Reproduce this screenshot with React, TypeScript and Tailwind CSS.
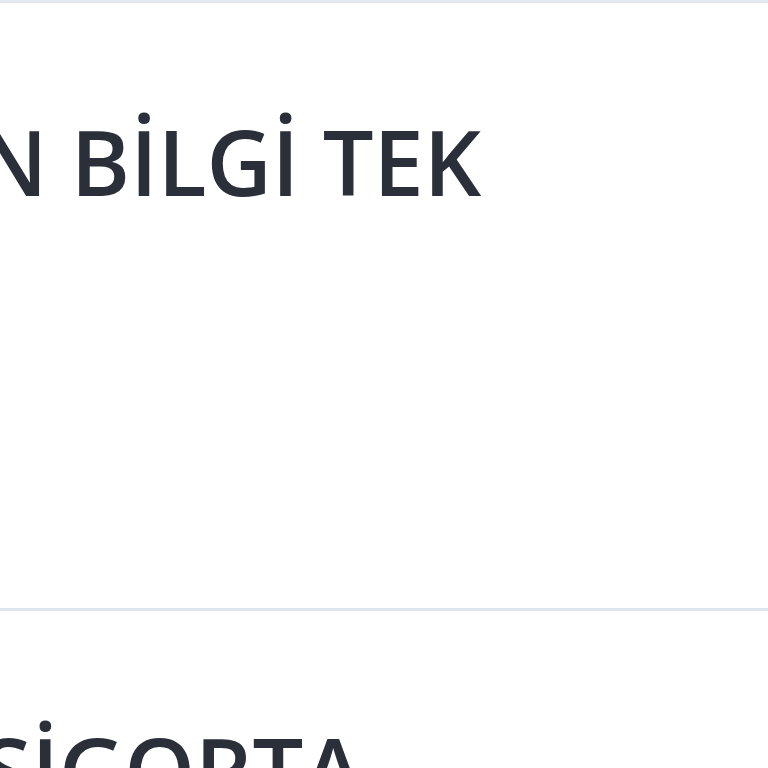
import React from 'react';

const rows = [
  { id: 'bilgi', text: 'N BİLGİ TEK', shift: 'ml-[-23px]' },
  { id: 'sigorta', text: 'SİGORTA', shift: 'ml-[-18px]' },
];

export default function App() {
  return (
    <div className="h-[768px] w-[768px] overflow-hidden bg-[#fffffd]" style={{ fontFamily: '"Open Sans", "Noto Sans", sans-serif' }}>
      <div className="border-b-[3px] border-[#e2e8ee]" />
      {rows.map((row) => (
        <div key={row.id} className="h-[608px] overflow-hidden border-b-[3px] border-[#dfe5ec] bg-white pt-[102px]">
          <div className={`${row.shift} whitespace-nowrap text-[90px] font-semibold leading-[1.25] text-[#2a2f3a]`}>
            {row.text}
          </div>
        </div>
      ))}
    </div>
  );
}
